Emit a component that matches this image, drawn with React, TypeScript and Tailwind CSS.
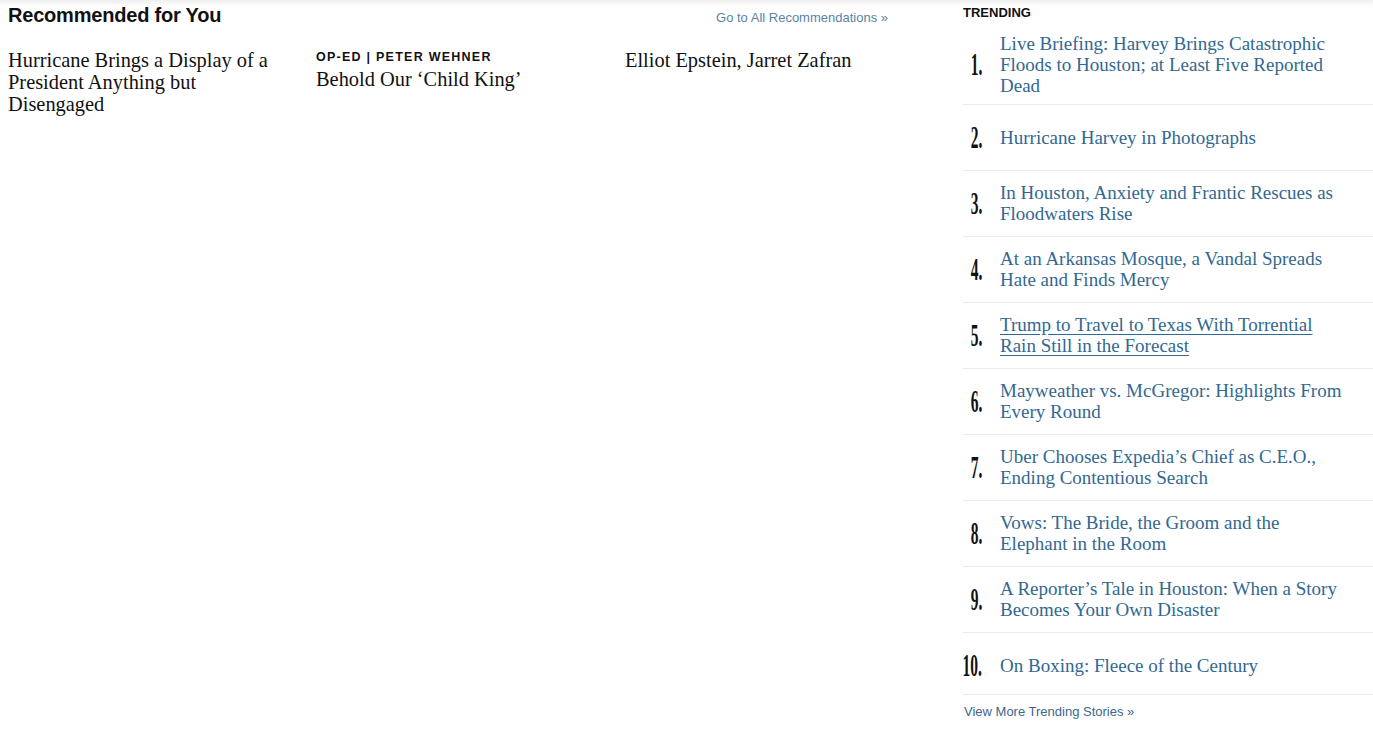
const recommended = [
  { label: "", title: "Hurricane Brings a Display of a President Anything but Disengaged" },
  { label: "OP-ED | PETER WEHNER", title: "Behold Our \u2018Child King\u2019" },
  { label: "", title: "Elliot Epstein, Jarret Zafran" },
];

const trending = [
  "Live Briefing: Harvey Brings Catastrophic Floods to Houston; at Least Five Reported Dead",
  "Hurricane Harvey in Photographs",
  "In Houston, Anxiety and Frantic Rescues as Floodwaters Rise",
  "At an Arkansas Mosque, a Vandal Spreads Hate and Finds Mercy",
  "Trump to Travel to Texas With Torrential Rain Still in the Forecast",
  "Mayweather vs. McGregor: Highlights From Every Round",
  "Uber Chooses Expedia\u2019s Chief as C.E.O., Ending Contentious Search",
  "Vows: The Bride, the Groom and the Elephant in the Room",
  "A Reporter\u2019s Tale in Houston: When a Story Becomes Your Own Disaster",
  "On Boxing: Fleece of the Century",
];

const sans = "font-['Liberation_Sans',Arial,sans-serif]";
const serif = "font-['Liberation_Serif','Times_New_Roman',serif]";

export default function App() {
  return (
    <div className="min-h-[746px] w-full bg-white shadow-[inset_0_7px_6px_-5px_rgba(0,0,0,0.09)] flex">
      {/* Recommended */}
      <section className="w-[880px] ml-2 shrink-0">
        <div className="flex justify-between items-start pt-[3px]">
          <h2 className={`${sans} text-[20px] leading-6 font-bold text-[#111] tracking-[-0.01em]`}>
            Recommended for You
          </h2>
          <a className={`${sans} text-[13px] leading-6 text-[#5a83a5] mt-[3px]`}>
            Go to All Recommendations »
          </a>
        </div>
        <div className="grid grid-cols-[308px_309px_1fr] mt-[19px]">
          {recommended.map((r, i) => (
            <div key={i} className="pr-6">
              {r.label && (
                <div className={`${sans} text-[12.5px] leading-4 font-bold tracking-[0.1em] text-[#111] mb-[3px]`}>
                  {r.label}
                </div>
              )}
              <h3 className={`${serif} text-[20.4px] leading-[22px] text-[#111]`}>{r.title}</h3>
            </div>
          ))}
        </div>
      </section>

      {/* Trending */}
      <aside className="ml-[75px] flex-1">
        <h2 className={`${sans} text-[13px] leading-4 font-bold text-[#111] pt-[5px]`}>TRENDING</h2>
        <ol className="mt-[1px]">
          {trending.map((t, i) => (
            <li
              key={i}
              className={`flex items-center border-b border-[#ebebeb] pt-[11px] ${
                i === 0 ? "pb-2" : i === 9 ? "pb-2 min-h-[62px]" : "pb-3 min-h-[66px]"
              }`}
            >
              <span className="w-[37px] shrink-0 flex justify-end pr-[18px]">
                <span
                  className={`${serif} inline-block text-[31px] leading-none font-bold text-[#111] scale-x-[0.5] origin-right`}
                >
                  {i + 1}.
                </span>
              </span>
              <a
                className={`${serif} text-[19px] leading-[21px] text-[#326891] pr-6 ${
                  i === 4 ? "underline underline-offset-[3px]" : ""
                }`}
              >
                {t}
              </a>
            </li>
          ))}
        </ol>
        <a className={`${sans} block text-[13px] leading-4 text-[#3b6790] mt-[9px] ml-px`}>
          View More Trending Stories »
        </a>
      </aside>
    </div>
  );
}
